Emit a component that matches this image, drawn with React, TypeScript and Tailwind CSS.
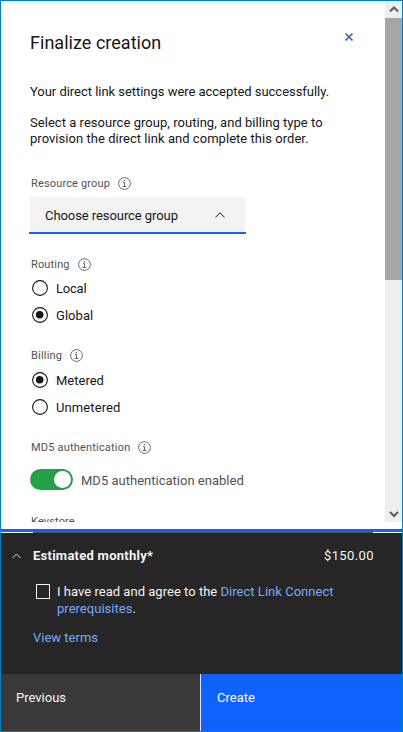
import type { ReactNode } from "react";

function InfoIcon() {
  return (
    <svg width="13" height="13" viewBox="0 0 13 13" fill="none" stroke="#5c5c5c" className="shrink-0">
      <circle cx="6.5" cy="6.5" r="5.9" strokeWidth="0.9" />
      <path d="M5 5.5h1.5v4M4.6 9.5h3.8" strokeWidth="0.9" />
      <circle cx="6.4" cy="3.4" r="0.75" fill="#5c5c5c" stroke="none" />
    </svg>
  );
}

function FieldLabel({ children, tracking }: { children: ReactNode; tracking: string }) {
  return (
    <div className="flex h-4 items-center gap-2 pl-px text-[11px] leading-4 text-[#525252]">
      <span className={`pt-0.5 ${tracking}`}>{children}</span>
      <InfoIcon />
    </div>
  );
}

function Radio({ label, checked, tracking }: { label: string; checked?: boolean; tracking: string }) {
  return (
    <label className="flex h-[27px] items-center gap-2 pl-0.5 text-[13px] leading-4">
      <svg width="16" height="16" viewBox="0 0 16 16" className="shrink-0">
        <circle cx="8" cy="8" r="7.4" fill="none" stroke="#161616" strokeWidth="1.1" />
        {checked && <circle cx="7.7" cy="7.7" r="3.8" fill="#161616" />}
      </svg>
      <span className={`pt-0.5 ${tracking}`}>{label}</span>
    </label>
  );
}

function Scrollbar() {
  return (
    <div className="flex w-[17px] shrink-0 flex-col bg-[#eeeeee]">
      <div className="flex h-[17px] items-center justify-center">
        <svg width="10" height="7" viewBox="0 0 10 7" fill="none" stroke="#606060" strokeWidth="2.2">
          <path d="M1 5.5l4-4 4 4" />
        </svg>
      </div>
      <div className="h-[262px] bg-[#a6a6a6]" />
      <div className="flex-1" />
      <div className="flex h-[17px] items-center justify-center pt-0.5">
        <svg width="10" height="7" viewBox="0 0 10 7" fill="none" stroke="#606060" strokeWidth="2.2">
          <path d="M1 1l4 4 4-4" />
        </svg>
      </div>
    </div>
  );
}

export default function App() {
  return (
    <div className="flex h-[732px] w-[403px] flex-col overflow-hidden border border-[#0080c0] bg-white font-['Roboto','Liberation_Sans',sans-serif] text-[13px] leading-4 text-[#161616]">
      <div className="flex h-[521px] shrink-0">
        <main className="h-full flex-1 overflow-hidden pl-[29px]">
          <header className="flex h-[83px] items-start justify-between pr-[31px] pt-[30px]">
            <h1 className="text-[18px] leading-6 tracking-[0.03px]">Finalize creation</h1>
            <svg width="10" height="10" viewBox="0 0 10 10" stroke="#3460ac" strokeWidth="1.6" className="mt-px">
              <path d="M1.5 1.5l7 7M8.5 1.5l-7 7" />
            </svg>
          </header>
          <p className="whitespace-nowrap tracking-[-0.035px]">Your direct link settings were accepted successfully.</p>
          <p className="mt-[15px] whitespace-nowrap tracking-[0.04px]">
            Select a resource group, routing, and billing type to
            <br />
            provision the direct link and complete this order.
          </p>
          <div className="mt-[28px]">
            <FieldLabel tracking="tracking-[0.15px]">Resource group</FieldLabel>
          </div>
          <div className="-ml-px mt-1.5 w-[217px] border-b-2 border-[#0f62fe]">
            <div className="mx-px flex h-[35px] items-center justify-between bg-[#f3f3f3] pl-[15px] pr-5">
              <span className="pt-[3px] tracking-[-0.07px]">Choose resource group</span>
              <svg width="10" height="6" viewBox="0 0 10 6" fill="none" stroke="#161616" strokeWidth="1">
                <path d="M.5 5.3L5 .8l4.5 4.5" />
              </svg>
            </div>
          </div>
          <div className="mt-[22px]">
            <FieldLabel tracking="tracking-[0.15px]">Routing</FieldLabel>
            <div className="mt-0.5">
              <Radio label="Local" tracking="tracking-[-0.2px]" />
              <Radio label="Global" checked tracking="tracking-[0.05px]" />
            </div>
          </div>
          <div className="mt-[19px]">
            <FieldLabel tracking="tracking-[0.2px]">Billing</FieldLabel>
            <div className="mt-[3px]">
              <Radio label="Metered" checked tracking="tracking-[0px]" />
              <Radio label="Unmetered" tracking="tracking-[0.1px]" />
            </div>
          </div>
          <div className="mt-[19px]">
            <FieldLabel tracking="tracking-[0.19px]">MD5 authentication</FieldLabel>
          </div>
          <div className="mt-3.5 flex h-[21px] items-center gap-2">
            <div className="flex h-[21px] w-[43px] items-center justify-end rounded-full bg-[#24a148] pr-[2.5px]">
              <div className="size-[17px] rounded-full bg-white" />
            </div>
            <span className="pt-0.5 tracking-[0.01px] text-[#525252]">MD5 authentication enabled</span>
          </div>
          <div className="mt-6 pl-px text-[11px] leading-4 tracking-[0.15px] text-[#525252]">Keystore</div>
        </main>
        <Scrollbar />
      </div>
      <div className="mt-[7px] h-[3px] shrink-0 bg-[#0f62fe]" />
      <div className="h-px shrink-0 pl-8 pr-[29px]">
        <div className="h-px bg-[#525252]" />
      </div>
      <footer className="flex flex-1 flex-col bg-[#262626] text-[#f4f4f4]">
        <div className="h-[141px] shrink-0 pl-[11px] pr-7 pt-[15px]">
          <div className="flex h-4 items-center">
            <svg width="9" height="6" viewBox="0 0 9 6" fill="none" stroke="#e0e0e0" strokeWidth="1">
              <path d="M.5 5l4-4 4 4" />
            </svg>
            <b className="ml-[12px] font-bold tracking-[0.26px]">Estimated monthly*</b>
            <span className="ml-auto tracking-[0.4px]">$150.00</span>
          </div>
          <div className="ml-[24px] mt-[19px] flex">
            <div className="mt-px h-[15px] w-3.5 shrink-0 border border-[#f4f4f4]" />
            <p className="ml-[7px] whitespace-nowrap leading-[17px] tracking-[0.025px]">
              I have read and agree to the <span className="text-[#78a9ff]">Direct Link Connect</span>
              <br />
              <span className="text-[#78a9ff]">prerequisites</span>.
            </p>
          </div>
          <div className="ml-[21px] mt-[13px] text-[#78a9ff]">View terms</div>
        </div>
        <div className="flex h-[57px]">
          <button className="flex w-[199px] items-start bg-[#393939] pl-[15px] pt-4">Previous</button>
          <div className="w-px bg-[#e0e0e0]" />
          <button className="flex flex-1 items-start bg-[#0f62fe] pl-4 pt-4 text-white">Create</button>
        </div>
      </footer>
    </div>
  );
}
